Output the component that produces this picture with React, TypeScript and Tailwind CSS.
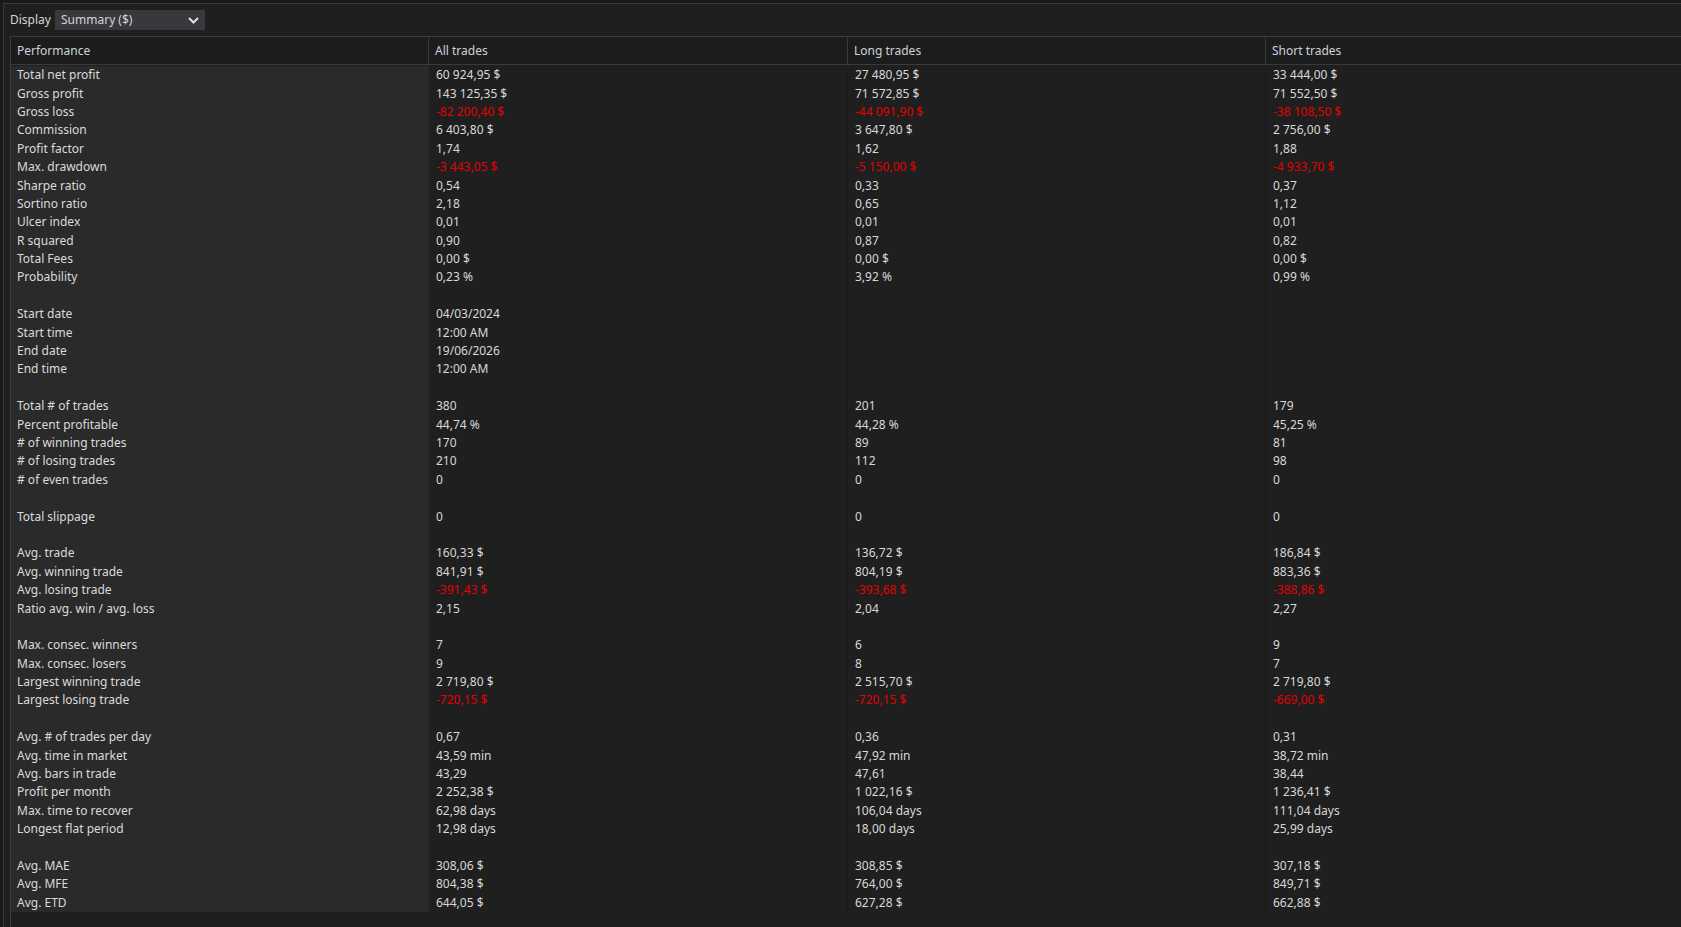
import React from "react";

type Row = [string, string, string, string] | null;

const rows: Row[] = [
  ["Total net profit", "60 924,95 $", "27 480,95 $", "33 444,00 $"],
  ["Gross profit", "143 125,35 $", "71 572,85 $", "71 552,50 $"],
  ["Gross loss", "-82 200,40 $", "-44 091,90 $", "-38 108,50 $"],
  ["Commission", "6 403,80 $", "3 647,80 $", "2 756,00 $"],
  ["Profit factor", "1,74", "1,62", "1,88"],
  ["Max. drawdown", "-3 443,05 $", "-5 150,00 $", "-4 933,70 $"],
  ["Sharpe ratio", "0,54", "0,33", "0,37"],
  ["Sortino ratio", "2,18", "0,65", "1,12"],
  ["Ulcer index", "0,01", "0,01", "0,01"],
  ["R squared", "0,90", "0,87", "0,82"],
  ["Total Fees", "0,00 $", "0,00 $", "0,00 $"],
  ["Probability", "0,23 %", "3,92 %", "0,99 %"],
  null,
  ["Start date", "04/03/2024", "", ""],
  ["Start time", "12:00 AM", "", ""],
  ["End date", "19/06/2026", "", ""],
  ["End time", "12:00 AM", "", ""],
  null,
  ["Total # of trades", "380", "201", "179"],
  ["Percent profitable", "44,74 %", "44,28 %", "45,25 %"],
  ["# of winning trades", "170", "89", "81"],
  ["# of losing trades", "210", "112", "98"],
  ["# of even trades", "0", "0", "0"],
  null,
  ["Total slippage", "0", "0", "0"],
  null,
  ["Avg. trade", "160,33 $", "136,72 $", "186,84 $"],
  ["Avg. winning trade", "841,91 $", "804,19 $", "883,36 $"],
  ["Avg. losing trade", "-391,43 $", "-393,68 $", "-388,86 $"],
  ["Ratio avg. win / avg. loss", "2,15", "2,04", "2,27"],
  null,
  ["Max. consec. winners", "7", "6", "9"],
  ["Max. consec. losers", "9", "8", "7"],
  ["Largest winning trade", "2 719,80 $", "2 515,70 $", "2 719,80 $"],
  ["Largest losing trade", "-720,15 $", "-720,15 $", "-669,00 $"],
  null,
  ["Avg. # of trades per day", "0,67", "0,36", "0,31"],
  ["Avg. time in market", "43,59 min", "47,92 min", "38,72 min"],
  ["Avg. bars in trade", "43,29", "47,61", "38,44"],
  ["Profit per month", "2 252,38 $", "1 022,16 $", "1 236,41 $"],
  ["Max. time to recover", "62,98 days", "106,04 days", "111,04 days"],
  ["Longest flat period", "12,98 days", "18,00 days", "25,99 days"],
  null,
  ["Avg. MAE", "308,06 $", "308,85 $", "307,18 $"],
  ["Avg. MFE", "804,38 $", "764,00 $", "849,71 $"],
  ["Avg. ETD", "644,05 $", "627,28 $", "662,88 $"],
];

function Val({ v }: { v: string }) {
  const neg = v.startsWith("-");
  return (
    <div className={"h-[18.4px] flex items-center pl-[7px] whitespace-nowrap " + (neg ? "text-[#e50000]" : "text-[#d8d8d8]")}>
      {v}
    </div>
  );
}

export default function App() {
  return (
    <div className="w-[1681px] h-[927px] bg-[#1a1a1a] overflow-hidden font-['Noto_Sans',sans-serif] text-[12px] leading-none">
      <div className="ml-[3px] mt-[3px] h-[924px] border-l border-t border-[#3a3a3a] bg-[#1f1f1f] flex flex-col">
        <div className="h-[32px] flex items-center pl-[6px] shrink-0">
          <span className="text-[#d4d4d4] w-[45px]">Display</span>
          <div className="w-[150px] h-[20px] bg-[#38383d] flex items-center justify-between pl-[6px] pr-[6px] text-[#d4d4d4]">
            <span>Summary ($)</span>
            <svg width="11" height="7" viewBox="0 0 11 7" fill="none">
              <path d="M1 1L5.5 5.5L10 1" stroke="#e0e0e0" strokeWidth="2" />
            </svg>
          </div>
        </div>
        <div className="ml-[6px] border-l border-t border-[#3c3c3c] flex-1 overflow-hidden">
          <div className="grid grid-cols-[418px_419px_418px_1fr] h-[28px] bg-[#1c1c1c] border-b border-[#3a3a3a] text-[#ccd3da]">
            <div className="flex items-center pl-[6px] border-r border-[#3a3a3a]">Performance</div>
            <div className="flex items-center pl-[6px] border-r border-[#3a3a3a]">All trades</div>
            <div className="flex items-center pl-[6px] border-r border-[#3a3a3a]">Long trades</div>
            <div className="flex items-center pl-[6px]">Short trades</div>
          </div>
          <div className="grid grid-cols-[418px_419px_418px_1fr] pt-[1px]">
            <div className="bg-[#2a2a2a] border-r border-[#2a2a2a]">
              {rows.map((r, i) => (
                <div key={i} className="h-[18.4px] flex items-center pl-[6px] text-[#dadada] whitespace-nowrap">
                  {r ? r[0] : ""}
                </div>
              ))}
            </div>
            {[1, 2, 3].map((c) => (
              <div key={c} className={c < 3 ? "border-r border-[#1a1a1a]" : ""}>
                {rows.map((r, i) => (
                  <Val key={i} v={r ? r[c] : ""} />
                ))}
              </div>
            ))}
          </div>
        </div>
      </div>
    </div>
  );
}
